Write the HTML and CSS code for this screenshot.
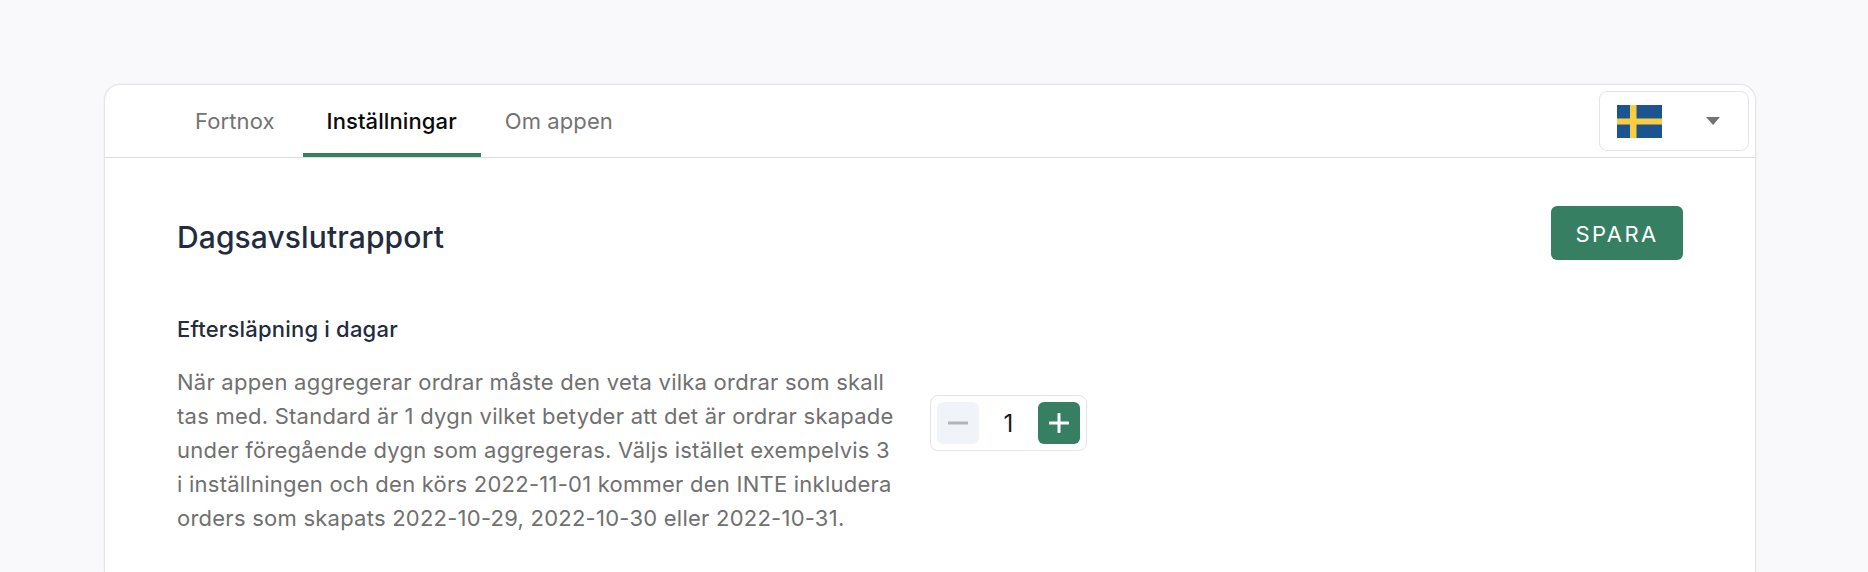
FILE: index.html
```html
<!DOCTYPE html>
<html lang="sv">
<head>
    <meta charset="UTF-8">
    <title>Inställningar</title>
    <link rel="stylesheet" href="styles.css">
</head>
<body>
    <div class="card">
        <div class="tab-bar">
            <nav class="tabs">
                <a class="tab">Fortnox</a>
                <a class="tab active">Inställningar</a>
                <a class="tab">Om appen</a>
            </nav>
            <div class="lang-select">
                <svg class="flag" viewBox="0 0 45 33">
                    <rect width="45" height="33" fill="#1c5490"/>
                    <rect x="13" width="6.5" height="33" fill="#f9cd40"/>
                    <rect y="13.5" width="45" height="6" fill="#f9cd40"/>
                </svg>
                <span class="caret"></span>
            </div>
        </div>
        <div class="content">
            <div class="page-head">
                <h1>Dagsavslutrapport</h1>
                <button class="save-btn">SPARA</button>
            </div>
            <h2>Eftersläpning i dagar</h2>
            <div class="setting">
                <p>När appen aggregerar ordrar måste den veta vilka ordrar som skall tas med. Standard är 1 dygn vilket betyder att det är ordrar skapade under föregående dygn som aggregeras. Väljs istället exempelvis 3 i inställningen och den körs 2022-11-01 kommer den INTE inkludera orders som skapats 2022-10-29, 2022-10-30 eller 2022-10-31.</p>
                <div class="stepper">
                    <button class="step-btn minus">
                        <svg viewBox="0 0 20 20"><path d="M1 10h18"/></svg>
                    </button>
                    <span class="step-value">1</span>
                    <button class="step-btn plus">
                        <svg viewBox="0 0 20 20"><path d="M1 10h18M10 1v18"/></svg>
                    </button>
                </div>
            </div>
        </div>
    </div>
</body>
</html>
```

FILE: styles.css
```css
* {
    box-sizing: border-box;
}

html {
    overflow: hidden;
}

body {
    margin: 0;
    height: 572px;
    overflow: hidden;
    background: #f9f9fb;
    font-family: 'Inter', sans-serif;
    padding: 84px 112px 0 104px;
}

.card {
    background: #fff;
    border: 1px solid #e4e4e6;
    border-bottom: none;
    border-radius: 16px 16px 0 0;
    height: 488px;
    overflow: hidden;
    box-shadow: 0 0 2px rgba(0, 0, 0, 0.08);
}

.tab-bar {
    display: flex;
    justify-content: space-between;
    height: 73px;
    border-bottom: 1px solid #dedee0;
    padding-right: 6px;
}

.tabs {
    display: flex;
    padding-left: 66px;
    height: 72px;
}

.tab {
    display: flex;
    align-items: center;
    padding: 4px 24px 0;
    border-bottom: 4px solid transparent;
    font-size: 22px;
    letter-spacing: 0.1px;
    color: #737373;
}

.tab:first-child {
    margin-right: 4px;
}

.tab.active {
    color: #0a0a0a;
    font-weight: 450;
    letter-spacing: 0.1px;
    border-bottom-color: #367f62;
}

.lang-select {
    display: flex;
    align-items: center;
    justify-content: space-between;
    width: 150px;
    height: 60px;
    margin-top: 6px;
    border: 1px solid #e4e4e6;
    border-radius: 8px;
    padding: 0 28px 0 17px;
}

.flag {
    width: 45px;
    height: 33px;
    display: block;
}

.caret {
    width: 0;
    height: 0;
    border-left: 7px solid transparent;
    border-right: 7px solid transparent;
    border-top: 8px solid #737373;
}

.content {
    padding: 0 72px;
}

.page-head {
    display: flex;
    justify-content: space-between;
    align-items: center;
    padding-top: 48px;
}

h1 {
    margin: 7px 0 0;
    font-size: 30px;
    font-weight: 450;
    letter-spacing: 0.1px;
    color: #232b40;
}

.save-btn {
    width: 132px;
    height: 54px;
    padding: 2px 0 0;
    background: #367f62;
    border: none;
    border-radius: 6px;
    color: #fff;
    font-family: inherit;
    font-size: 22px;
    letter-spacing: 2.4px;
}

h2 {
    margin: 55px 0 0;
    font-size: 22px;
    font-weight: 450;
    letter-spacing: 0.2px;
    line-height: 28px;
    color: #232b40;
}

.setting {
    display: flex;
    align-items: flex-start;
    gap: 30px;
    margin-top: 22px;
}

.setting p {
    margin: 0;
    width: 723px;
    font-size: 22px;
    letter-spacing: 0.24px;
    line-height: 34px;
    color: #707070;
}

.stepper {
    display: flex;
    align-items: center;
    justify-content: space-between;
    flex-shrink: 0;
    width: 157px;
    height: 56px;
    margin-top: 30px;
    padding: 0 6px;
    border: 1px solid #e4e4e6;
    border-radius: 8px;
}

.step-btn {
    display: flex;
    align-items: center;
    justify-content: center;
    width: 42px;
    height: 42px;
    padding: 0;
    border: none;
    border-radius: 6px;
}

.step-btn svg {
    width: 20px;
    height: 20px;
    fill: none;
    stroke-width: 3;
    stroke-linecap: round;
}

.minus {
    background: #f0f3f7;
}

.minus svg {
    stroke: #b0b3b8;
}

.plus {
    background: #367f62;
}

.plus svg {
    stroke: #fff;
}

.step-value {
    font-size: 24px;
    color: #1a1a1a;
}
```
